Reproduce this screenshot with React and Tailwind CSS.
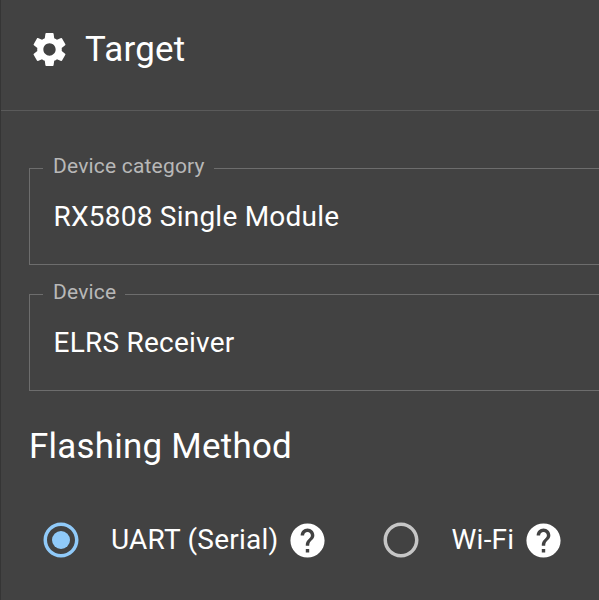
import { MdSettings, MdHelp, MdRadioButtonUnchecked } from 'react-icons/md';

function SelectField({ label, value }) {
  return (
    <fieldset className="ml-7 h-[102px] border border-r-0 border-[#6d6d6d] pl-[13px]">
      <legend className="h-[11px] pr-[9px] pl-[10px] text-[21px] leading-[7px] tracking-[0.19px] text-[#b8b8b8]">
        {label}
      </legend>
      <div className="mt-[23px] pl-[10.5px] text-[28px] leading-[40px] tracking-[0.23px]">{value}</div>
    </fieldset>
  );
}

function RadioOption({ label, checked }) {
  return (
    <label className="flex items-center">
      <span className="relative flex h-[42px] w-[42px] items-center justify-center">
        <MdRadioButtonUnchecked size={42} color={checked ? '#90caf9' : '#c6c6c6'} />
        {checked && <span className="absolute h-[18px] w-[18px] rounded-full bg-[#90caf9]" />}
      </span>
      <span className="ml-[29.5px] text-[28px] leading-[40px] tracking-[0.23px]">{label}</span>
      <MdHelp size={41} className="ml-[8.5px]" />
    </label>
  );
}

export default function App() {
  return (
    <div className="h-[600px] w-full overflow-hidden border-l border-[#353535] bg-[#424242] font-['Roboto',sans-serif] text-white">
      <header className="flex h-[111px] items-start border-b border-[#5a5a5a] pt-7 pl-7">
        <MdSettings size={41} className="mt-[0.5px]" />
        <h1 className="mt-px ml-[15px] text-[34.9px] leading-[42px] tracking-[0.26px]">Target</h1>
      </header>
      <main>
        <div className="flex flex-col gap-6 pt-[52px]">
          <SelectField label="Device category" value="RX5808 Single Module" />
          <SelectField label="Device" value="ELRS Receiver" />
        </div>
        <h2 className="mt-[35px] ml-7 text-[34.9px] leading-[42px] tracking-[0.26px]">Flashing Method</h2>
        <div className="mt-[51px] ml-[38.5px] flex gap-[52px]">
          <RadioOption label="UART (Serial)" checked />
          <RadioOption label="Wi-Fi" />
        </div>
      </main>
    </div>
  );
}
